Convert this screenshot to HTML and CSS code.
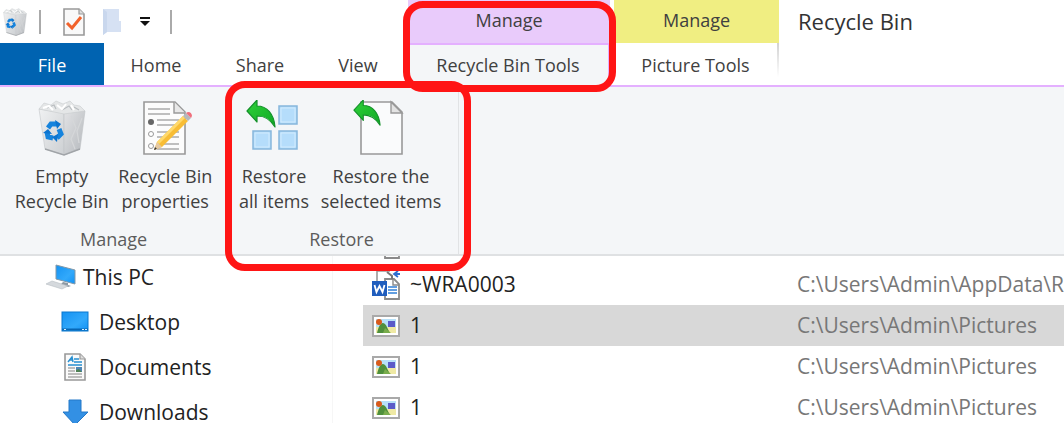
FILE: index.html
```
<!DOCTYPE html>
<html lang="en">
<head>
    <meta charset="UTF-8">
    <meta name="viewport" content="width=device-width, initial-scale=1.0">
    <title>Recycle Bin</title>
    <link rel="stylesheet" href="styles.css">
</head>
<body>
    <!-- shared icons -->
    <svg class="defs" width="0" height="0" aria-hidden="true">
        <defs>
            <linearGradient id="binLeft" x1="0" y1="0" x2="1" y2="1">
                <stop offset="0" stop-color="#f0f1f2"/>
                <stop offset="1" stop-color="#cdd0d3"/>
            </linearGradient>
            <linearGradient id="binRight" x1="0" y1="0" x2="1" y2="1">
                <stop offset="0" stop-color="#e2e3e5"/>
                <stop offset="1" stop-color="#b4b8bc"/>
            </linearGradient>
            <linearGradient id="screen" x1="0" y1="0" x2="1" y2="1">
                <stop offset="0" stop-color="#1592f2"/>
                <stop offset="0.6" stop-color="#32a9fb"/>
                <stop offset="1" stop-color="#1191f5"/>
            </linearGradient>
            <linearGradient id="arrow" x1="0" y1="0" x2="1" y2="1">
                <stop offset="0" stop-color="#2fd13a"/>
                <stop offset="1" stop-color="#0fa823"/>
            </linearGradient>
            <symbol id="bin" viewBox="0 0 48 56">
                <path d="M1 9 26 13 26 55 7 49z" fill="url(#binLeft)" stroke="#c3c6c9" stroke-width=".6"/>
                <path d="M26 13 47 11 42 49 26 55z" fill="url(#binRight)" stroke="#c0c3c6" stroke-width=".6"/>
                <path d="M1 9 6 3 13 5 18 1 25 4 32 1 36 5 42 6 47 11 26 14z" fill="#e4e6e7" stroke="#c9ccce" stroke-width=".6"/>
                <path d="M9 8l7-3 2 4M24 10l7-4 3 4M36 7l5 3" fill="none" stroke="#b9bdc0" stroke-width="1.2"/>
                <path d="M5 8l6-2 4 4M19 5l5 4 4-5M33 5l3 5" fill="none" stroke="#fff" stroke-width="2"/>
                <path d="M7 49l19 6 16-6" fill="none" stroke="#a0a4a8" stroke-width="1.4"/>
                <path d="M33 16l5 12-5 11 4 10M44 18l-5 13 2 12" fill="none" stroke="#d5d7d9" stroke-width="1.2"/>
                <g fill="none" stroke="#1583dd" stroke-width="5">
                    <path d="M10 28l3-4h6"/>
                    <path d="M21 29l2 5-4 4"/>
                    <path d="M15 38l-5-1-1-5"/>
                </g>
                <path d="M17 20l6 4-4 5zM20 34l-6 3 5 5zM5 33l5-4 4 5z" fill="#0c74cf"/>
            </symbol>
            <symbol id="restore-arrow" viewBox="0 0 30 30">
                <path d="M1 12 11 1v6c10 0 17 8 18 21-5-8-10-11-18-11v6z" fill="url(#arrow)" stroke="#14912a" stroke-width="1.2" stroke-linejoin="round"/>
            </symbol>
            <symbol id="picture" viewBox="0 0 28 22">
                <rect x="1" y="1" width="26" height="20" fill="#fff" stroke="#a9a9a9" stroke-width="2"/>
                <rect x="4" y="4" width="20" height="14" fill="#b7e0f8"/>
                <path d="M4 12h20v6H4z" fill="#efe9a4"/>
                <rect x="16" y="6" width="7" height="6" fill="#5b5bc8"/>
                <path d="M5 18c2-9 5-12 8-9 2 2 3 6 5 9z" fill="#4f8f3c"/>
                <path d="M11 18l2-5 6 5z" fill="#79ad4c"/>
                <circle cx="7" cy="7" r="3" fill="#d95a1b"/>
            </symbol>
            <symbol id="word" viewBox="0 0 28 30">
                <path d="M5 14V1h13" fill="none" stroke="#999" stroke-width="1.600"/>
                <path d="M13 9h9l5 5v15H13z" fill="#fff" stroke="#8a8a8a" stroke-width="1.800"/>
                <path d="M21 9v6h6" fill="none" stroke="#8a8a8a" stroke-width="1.400"/>
                <path d="M16 17h9M16 20h9M16 23h9" stroke="#2f7fd6" stroke-width="1.600"/>
                <path d="M28 4h-5M26 1l-4 3 4 3" fill="none" stroke="#2f6fd0" stroke-width="1.800"/>
                <path d="M15 2l5 4v3" fill="none" stroke="#777" stroke-width="2"/>
                <rect x="0" y="11" width="15" height="15" fill="#1f5dbd"/>
                <path d="M2.500 15l2 7 3-6 3 6 2-7" fill="none" stroke="#fff" stroke-width="1.800"/>
            </symbol>
        </defs>
    </svg>

    <header class="titlebar">
        <div class="main-tabs">
            <div class="quick-access">
                <svg class="qa-bin" width="24" height="28"><use href="#bin"/></svg>
                <span class="divider"></span>
                <button class="qa-button" aria-label="Properties">
                    <svg width="22" height="28" viewBox="0 0 22 28">
                        <path d="M1 1h15l5 5v21H1z" fill="#f9f9f9" stroke="#999" stroke-width="1.600"/>
                        <path d="M16 1v5h5" fill="#ddd" stroke="#999" stroke-width="1.200"/>
                        <path d="M4 15l5 5 9-11" fill="none" stroke="#f2622b" stroke-width="3"/>
                    </svg>
                </button>
                <button class="qa-button" aria-label="New folder">
                    <svg width="20" height="28" viewBox="0 0 20 28">
                        <path d="M1 1h16v12h2v11H5l-4 3z" fill="#d6e1f3"/>
                        <path d="M1 1l4 3v20l-4 3z" fill="#c9d7ed"/>
                    </svg>
                </button>
                <button class="qa-button" aria-label="Customize Quick Access Toolbar">
                    <svg width="12" height="10" viewBox="0 0 12 10">
                        <path d="M1 1h10" stroke="#111" stroke-width="2"/>
                        <path d="M1 4h10L6 9z" fill="#111"/>
                    </svg>
                </button>
                <span class="divider"></span>
            </div>
            <nav class="tabs">
                <button class="tab file">File</button>
                <button class="tab">Home</button>
                <button class="tab">Share</button>
                <button class="tab view">View</button>
            </nav>
        </div>
        <div class="context recycle">
            <div class="context-title">Manage</div>
            <button class="tab active">Recycle Bin Tools</button>
            <div class="highlight highlight-tab"></div>
        </div>
        <div class="context picture">
            <div class="context-title">Manage</div>
            <button class="tab">Picture Tools</button>
        </div>
        <h1>Recycle Bin</h1>
    </header>

    <section class="ribbon">
        <div class="group manage">
            <div class="commands">
                <button class="command">
                    <svg width="48" height="56"><use href="#bin"/></svg>
                    <span>Empty<br>Recycle Bin</span>
                </button>
                <button class="command">
                    <svg width="54" height="56" viewBox="-4 0 54 56">
                        <path d="M2 2h31l10 10v42H2z" fill="#fcfcfc" stroke="#999" stroke-width="1.600"/>
                        <path d="M32 2v11h11" fill="#e8e8e8" stroke="#999" stroke-width="1.400"/>
                        <path d="M6 9h22M6 14h22M15 20h22M15 25h22M15 32h22M15 37h22M15 44h22M15 49h22" stroke="#aaa" stroke-width="1.300"/>
                        <circle cx="9" cy="22" r="3" fill="#666"/>
                        <circle cx="9" cy="34" r="2.500" fill="#fff" stroke="#999"/>
                        <circle cx="9" cy="46" r="2.500" fill="#fff" stroke="#999"/>
                        <path d="M12 50l3-8L41 16l5 5-26 26z" fill="#f8bd35"/>
                        <path d="M15 42L41 16l2 2-26 26z" fill="#ffd96b"/>
                        <path d="M12 50l3-8 5 5z" fill="#e5c9a3"/>
                        <path d="M12 50l1-3 2 2z" fill="#333"/>
                        <path d="M41 16l3-3 5 5-3 3z" fill="#b4b8bc"/>
                        <path d="M44 13c3-3 8 1 5 5z" fill="#f0707d"/>
                    </svg>
                    <span>Recycle Bin<br>properties</span>
                </button>
            </div>
            <div class="group-name">Manage</div>
        </div>
        <div class="group restore">
            <div class="commands">
                <button class="command all">
                    <svg width="58" height="56" viewBox="0 0 58 56">
                        <g fill="#b5ddfb" stroke="#86b6dc" stroke-width="1.500">
                            <path d="M34 6h18v18H34zM34 31h18v18H34zM8 31h18v18H8z"/>
                        </g>
                        <path d="M36 8h14v14H36zM36 33h14v14H36zM10 33h14v14H10z" fill="none" stroke="#d2ebfd"/>
                        <use href="#restore-arrow" x="0" y="-1" width="32" height="30"/>
                    </svg>
                    <span>Restore<br>all items</span>
                </button>
                <button class="command selected-items">
                    <svg width="60" height="56" viewBox="0 0 60 56">
                        <path d="M10 2h31l10 10v42H10z" fill="#fafbfc" stroke="#999" stroke-width="1.600"/>
                        <path d="M40 2v11h11z" fill="#e3e3e3" stroke="#999" stroke-width="1.400"/>
                        <use href="#restore-arrow" x="2" y="-1" width="28" height="28"/>
                    </svg>
                    <span>Restore the<br>selected items</span>
                </button>
            </div>
            <div class="group-name">Restore</div>
            <div class="highlight highlight-restore"></div>
        </div>
    </section>

    <main class="explorer">
        <nav class="sidebar">
            <a class="place this-pc" href="#">
                <svg width="30" height="28" viewBox="0 0 30 28">
                    <path d="M10 2l19 5v14l-19-5z" fill="url(#screen)" stroke="#8298a8"/>
                    <path d="M17 19l5 1v2l3 1-3 1-8-2z" fill="#8d99a3"/>
                    <path d="M0 21l6-3 16 5-6 3z" fill="#d5d9dd" stroke="#b7bdc2" stroke-width=".6"/>
                </svg>
                This PC
            </a>
            <a class="place" href="#">
                <svg width="28" height="28" viewBox="0 0 28 28">
                    <rect x="1" y="4" width="26" height="19" fill="url(#screen)" stroke="#0b78cf"/>
                    <path d="M1 21.500h26" stroke="#0867b5" stroke-width="2"/>
                    <path d="M3 21.500h2M21 21.500h2M24 21.500h2" stroke="#d9efff"/>
                </svg>
                Desktop
            </a>
            <a class="place" href="#">
                <svg width="28" height="28" viewBox="0 0 28 28">
                    <path d="M4 1h15l5 5v21H4z" fill="#fafafa" stroke="#999" stroke-width="1.600"/>
                    <path d="M19 1v5h5" fill="#ddd" stroke="#999" stroke-width="1.200"/>
                    <path d="M7 9l4-5 1 5M8 7h4M13 6h5M13 9h8M7 12h14" fill="none" stroke="#268ed0" stroke-width="1.500"/>
                    <path d="M7 15h7M7 18h7M7 21h14M7 24h14" stroke="#aaa" stroke-width="1.300"/>
                    <rect x="15" y="14" width="6" height="5" fill="#4f86b5"/>
                    <path d="M15 17l3-1 3 3h-6z" fill="#4d8155"/>
                </svg>
                Documents
            </a>
            <a class="place" href="#">
                <svg width="28" height="28" viewBox="0 0 28 28">
                    <path d="M8 2h12v12h7L14 27 2 14h6z" fill="#3390e4" stroke="#2478c8"/>
                </svg>
                Downloads
            </a>
        </nav>
        <div class="files">
            <table>
                <tbody>
                    <tr>
                        <td class="name"><svg width="28" height="30"><use href="#word"/></svg></td>
                        <td class="path">C:\Users\Admin\AppData\R</td>
                    </tr>
                    <tr>
                        <td class="name"><svg width="28" height="30"><use href="#word"/></svg>~WRA0003</td>
                        <td class="path">C:\Users\Admin\AppData\R</td>
                    </tr>
                    <tr class="selected">
                        <td class="name"><svg width="28" height="22"><use href="#picture"/></svg>1</td>
                        <td class="path">C:\Users\Admin\Pictures</td>
                    </tr>
                    <tr>
                        <td class="name"><svg width="28" height="22"><use href="#picture"/></svg>1</td>
                        <td class="path">C:\Users\Admin\Pictures</td>
                    </tr>
                    <tr>
                        <td class="name"><svg width="28" height="22"><use href="#picture"/></svg>1</td>
                        <td class="path">C:\Users\Admin\Pictures</td>
                    </tr>
                </tbody>
            </table>
        </div>
    </main>
</body>
</html>
```
FILE: styles.css
```
* {
    margin: 0;
    padding: 0;
    box-sizing: border-box;
}

body {
    font-family: 'Open Sans', 'Noto Sans', sans-serif;
    font-size: 18px;
    color: #404040;
    background-color: white;
    display: flex;
    flex-direction: column;
    height: 100vh;
    overflow: hidden;
}

button {
    font: inherit;
    color: inherit;
    background: none;
    border: none;
    cursor: pointer;
}

svg {
    display: block;
    flex: none;
}

.defs {
    position: absolute;
}

/* Title bar and tabs */
.titlebar {
    display: flex;
    border-bottom: 2px solid #e4b0ff;
}

.main-tabs {
    width: 408px;
}

.quick-access {
    display: flex;
    align-items: center;
    height: 43px;
    padding-left: 3px;
}

.divider {
    width: 2px;
    height: 24px;
    margin: 0 22px 0 12px;
    background-color: #aaa;
}

.qa-button {
    margin-right: 17px;
}

.qa-button + .divider {
    margin-left: 2px;
}

.tabs {
    display: flex;
}

.tab {
    width: 104px;
    height: 42px;
    padding-top: 1px;
}

.tab.file {
    color: white;
    background-color: #0063b1;
}

.tab.view {
    width: 92px;
}

.context {
    position: relative;
    display: flex;
    flex-direction: column;
}

.context .tab {
    width: 100%;
}

.context-title {
    height: 43px;
    line-height: 40px;
    text-align: center;
}

.recycle {
    width: 202px;
    margin-right: 4px;
    background-color: #e9cbfb;
}

.recycle .tab {
    height: 44px;
    margin-bottom: -2px;
    padding: 0 2px 3px 0;
    border: 2px solid #e4b0ff;
    border-bottom: none;
    background-color: #f4f6f8;
}

.picture {
    width: 165px;
}

.picture .context-title {
    background-color: #f0ee82;
}

.picture .tab {
    border-right: 2px solid;
    border-image: linear-gradient(#d0d0d0, white 80%) 1;
}

h1 {
    margin-left: 19px;
    font-size: 22px;
    font-weight: normal;
    line-height: 43px;
    color: #333;
}

/* Ribbon */
.ribbon {
    display: flex;
    height: 169px;
    background-color: #f4f6f8;
    border-bottom: 2px solid #dfe1e3;
}

.group {
    position: relative;
    padding-top: 13px;
}

.manage {
    width: 229px;
    padding-left: 10px;
    padding-right: 12px;
}

.restore {
    width: 230px;
    padding-left: 3px;
    padding-right: 7px;
    border-right: 1px solid #e1e3e5;
}

.commands {
    display: flex;
}

.command {
    display: flex;
    flex-direction: column;
    align-items: center;
    gap: 8px;
    width: 104px;
    line-height: 25px;
    white-space: nowrap;
}

.command.all {
    width: 84px;
}

.command.selected-items {
    width: 130px;
}

.group-name {
    margin-top: 13px;
    line-height: 25px;
    text-align: center;
    color: #5c5c5c;
}

/* Red frames around the steps */
.highlight {
    position: absolute;
    border: 7px solid #ff1515;
    border-radius: 20px;
    pointer-events: none;
    z-index: 1;
}

.highlight-tab {
    top: 1px;
    right: -6px;
    bottom: -7px;
    left: -5px;
}

.highlight-restore {
    top: -6px;
    right: -13px;
    bottom: -17px;
    left: -4px;
}

/* Explorer body */
.explorer {
    display: flex;
    flex: 1;
    min-height: 0;
    font-size: 21px;
    color: #222;
    overflow: hidden;
}

.sidebar {
    width: 333px;
    margin-top: -2px;
    border-right: 1px solid #f6f6f6;
}

.place {
    display: flex;
    align-items: center;
    gap: 10px;
    height: 45px;
    padding-left: 61px;
    line-height: 24px;
    color: inherit;
    text-decoration: none;
}

.place.this-pc {
    gap: 7px;
    padding-left: 46px;
}

.files {
    flex: 1;
    min-width: 0;
    margin-left: 30px;
    overflow: hidden;
}

/* the list is scrolled part of a row down */
table {
    width: 100%;
    margin-top: -33px;
    table-layout: fixed;
    border-collapse: collapse;
}

td {
    height: 41px;
    line-height: 43px;
    white-space: nowrap;
}

.name {
    display: flex;
    align-items: center;
    gap: 10px;
    padding-left: 9px;
}

td.path {
    width: 267px;
    height: 41px;
    line-height: 41px;
    color: #777;
}

.selected {
    background-color: #d8d8d8;
}
```
